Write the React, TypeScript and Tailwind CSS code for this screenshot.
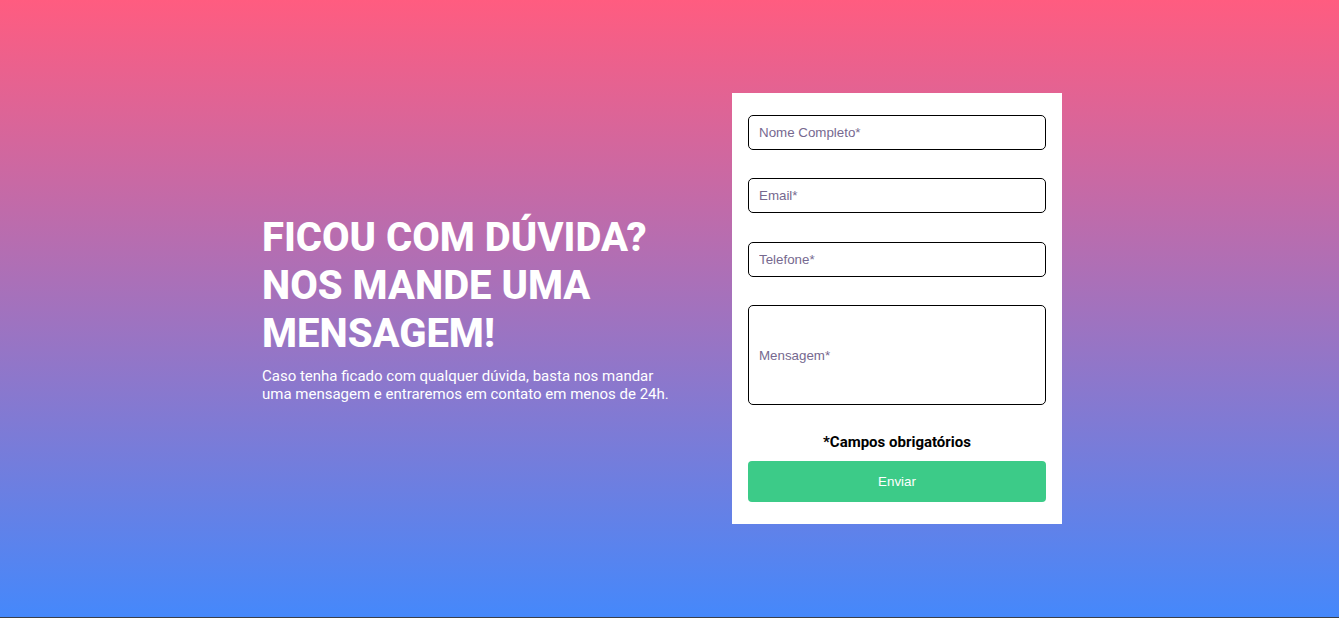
import React from "react";

export default function App() {
  return (
    <div className="w-full" style={{ fontFamily: "Roboto, 'Liberation Sans', sans-serif" }}>
      <section className="h-[617px] w-full bg-linear-to-b/srgb from-[#ff5c80] to-[#4588fb] flex items-center pl-[262px]">
        <div className="w-[470px] text-white">
          <h1 className="text-[40px] font-extrabold leading-[48px] uppercase">
            Ficou com dúvida?
            <br />
            Nos mande uma
            <br />
            mensagem!
          </h1>
          <p className="mt-[9px] text-[15px] leading-[18px] w-[440px]">
            Caso tenha ficado com qualquer dúvida, basta nos mandar
            <br />
            uma mensagem e entraremos em contato em menos de 24h.
          </p>
        </div>
        <form className="w-[330px] bg-white px-4 pt-[22px] pb-[22px] flex flex-col" onSubmit={(e) => e.preventDefault()}>
          <input
            className="h-[35px] w-full border border-black rounded-[5px] px-[10px] text-[13.333px] placeholder:text-[#76698f] outline-none"
            style={{ fontFamily: "'Liberation Sans', Arial, sans-serif" }}
            placeholder="Nome Completo*"
          />
          <input
            className="mt-[28px] h-[35px] w-full border border-black rounded-[5px] px-[10px] text-[13.333px] placeholder:text-[#76698f] outline-none"
            style={{ fontFamily: "'Liberation Sans', Arial, sans-serif" }}
            placeholder="Email*"
          />
          <input
            className="mt-[29px] h-[35px] w-full border border-black rounded-[5px] px-[10px] text-[13.333px] placeholder:text-[#76698f] outline-none"
            style={{ fontFamily: "'Liberation Sans', Arial, sans-serif" }}
            placeholder="Telefone*"
          />
          <input
            className="mt-[28px] h-[100px] w-full border border-black rounded-[5px] px-[10px] text-[13.333px] placeholder:text-[#76698f] outline-none"
            style={{ fontFamily: "'Liberation Sans', Arial, sans-serif" }}
            placeholder="Mensagem*"
          />
          <p className="mt-[28px] text-center text-[15px] font-bold text-black leading-[18px]">*Campos obrigatórios</p>
          <button
            type="submit"
            className="mt-[10px] h-[41px] w-full rounded-[4px] bg-[#3ccb88] text-white text-[13.333px]"
            style={{ fontFamily: "'Liberation Sans', Arial, sans-serif" }}
          >
            Enviar
          </button>
        </form>
      </section>
      <div className="h-px bg-[#3a3f4a]" />
    </div>
  );
}
